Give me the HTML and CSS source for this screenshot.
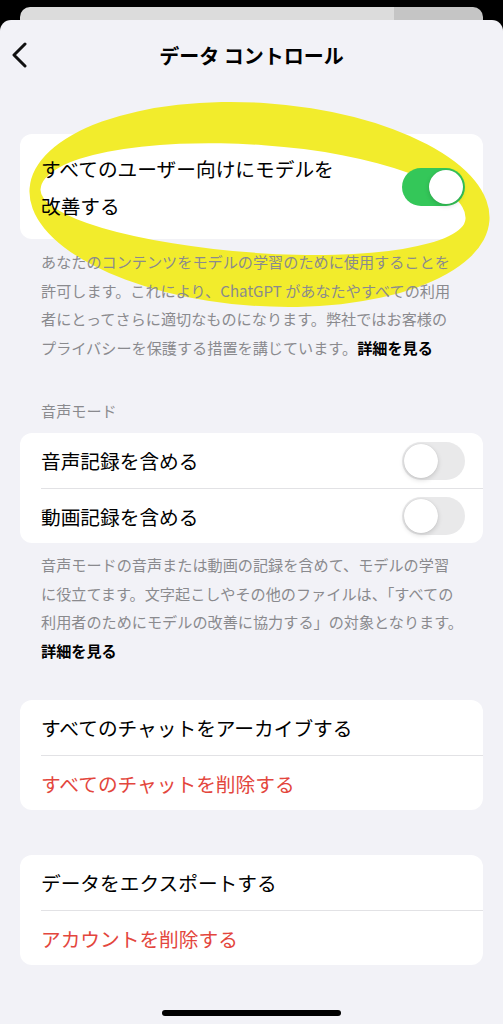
FILE: index.html
```html
<!DOCTYPE html>
<html lang="ja">
<head>
    <meta charset="UTF-8">
    <meta name="viewport" content="width=device-width, initial-scale=1.0">
    <title>データ コントロール</title>
    <link rel="stylesheet" href="styles.css">
</head>
<body>

    <div class="back-sheet"></div>

    <div class="sheet">
        <header class="nav">
            <button class="back" aria-label="戻る">
                <svg width="18" height="26" viewBox="0 0 18 26">
                    <path d="M15 2 L4 13 L15 24" fill="none" stroke="#111" stroke-width="3" stroke-linecap="round" stroke-linejoin="round"/>
                </svg>
            </button>
            <h1>データ コントロール</h1>
            <span></span>
        </header>

        <section class="group group-first">
            <div class="card">
                <div class="row row-tall">
                    <span class="label">すべてのユーザー向けにモデルを<br>改善する</span>
                    <span class="switch on"></span>
                </div>
            </div>
            <p class="note">あなたのコンテンツをモデルの学習のために使用することを<br>許可します。これにより、ChatGPT があなたやすべての利用<br>者にとってさらに適切なものになります。弊社ではお客様の<br>プライバシーを保護する措置を講じています。<b>詳細を見る</b></p>
        </section>

        <section class="group group-voice">
            <h2 class="group-title">音声モード</h2>
            <div class="card">
                <div class="row">
                    <span class="label">音声記録を含める</span>
                    <span class="switch"></span>
                </div>
                <div class="row">
                    <span class="label">動画記録を含める</span>
                    <span class="switch"></span>
                </div>
            </div>
            <p class="note note-voice">音声モードの音声または動画の記録を含めて、モデルの学習<br>に役立てます。文字起こしやその他のファイルは、「すべての<br>利用者のためにモデルの改善に協力する」の対象となります。<br><b>詳細を見る</b></p>
        </section>

        <section class="group group-chats">
            <div class="card">
                <div class="row">
                    <span class="label">すべてのチャットをアーカイブする</span>
                </div>
                <div class="row danger">
                    <span class="label">すべてのチャットを削除する</span>
                </div>
            </div>
        </section>

        <section class="group group-account">
            <div class="card">
                <div class="row">
                    <span class="label">データをエクスポートする</span>
                </div>
                <div class="row danger">
                    <span class="label">アカウントを削除する</span>
                </div>
            </div>
        </section>

        <div class="home-bar"></div>

        <!-- 蛍光ペンの丸 -->
        <div class="marker"></div>
    </div>

</body>
</html>
```

FILE: styles.css
```css
/* データ コントロール画面 */
* {
    box-sizing: border-box;
}
body {
    margin: 0;
    height: 1024px;
    overflow: hidden;
    background-color: #000;
    font-family: "Noto Sans CJK JP", "Noto Sans", sans-serif;
    color: #000;
}
.back-sheet {
    height: 13px;
    margin: 7px 20px 0;
    border-radius: 10px 10px 0 0;
    background: linear-gradient(to right, #dcdcdc 0, #dcdcdc 374px, #c5c5c5 374px);
}
.sheet {
    position: relative;
    height: 1004px;
    background-color: #f2f2f7;
    border-radius: 11px 11px 0 0;
}
.nav {
    height: 70px;
    display: grid;
    grid-template-columns: 60px 1fr 60px;
    align-items: center;
}
.back {
    display: flex;
    align-items: center;
    padding: 0 0 0 10px;
    border: none;
    background: none;
}
.nav h1 {
    margin: 0;
    font-size: 20px;
    font-weight: 600;
    text-align: center;
}
.card {
    margin: 0 20px;
    background-color: #fff;
    border-radius: 12px;
}
.row {
    display: flex;
    align-items: center;
    justify-content: space-between;
    height: 55px;
    margin-left: 21px;
    padding-right: 18px;
    font-size: 19.7px;
}
.row + .row {
    border-top: 1px solid #e2e2e5;
}
.row-tall {
    height: auto;
    padding-top: 16px;
    padding-bottom: 15px;
    line-height: 37px;
}
/* 文字とスイッチはマーカーより上に描く */
.label, .note, .switch {
    position: relative;
    z-index: 2;
}
.danger {
    color: #e3463d;
}
.note {
    margin: 8px 20px 0 41px;
    font-size: 15.15px;
    line-height: 28.5px;
    color: #8a8a8e;
}
.note b {
    color: #000;
    font-weight: 600;
}
.note-voice {
    margin-top: 7px;
}
.group-first {
    margin-top: 44px;
}
.group-title {
    margin: 39px 0 13px 41px;
    font-size: 15.15px;
    line-height: 20px;
    font-weight: normal;
    color: #8a8a8e;
}
.group-chats {
    margin-top: 36px;
}
.group-account {
    margin-top: 45px;
}
.switch {
    flex: none;
    width: 63px;
    height: 38px;
    border-radius: 19px;
    background-color: #e9e9ea;
}
.switch::after {
    content: "";
    position: absolute;
    top: 2px;
    left: 2px;
    width: 34px;
    height: 34px;
    border-radius: 50%;
    background-color: #fff;
    box-shadow: 0 2px 5px rgba(0,0,0,0.15), 0 0 1px rgba(0,0,0,0.15);
}
.switch.on {
    background-color: #34c759;
}
.switch.on::after {
    left: 27px;
}
.home-bar {
    width: 179px;
    height: 6px;
    margin: 45px auto 0;
    border-radius: 3px;
    background-color: #000;
}
/* 画面の上に描かれた黄色いマーカー: 太さの違う枠線で楕円の輪を作る */
.marker {
    position: absolute;
    top: 83px;
    left: 29px;
    z-index: 1;
    width: 461px;
    height: 203px;
    border-style: solid;
    border-color: #f2ec2c;
    border-width: 42px 24px 53px 11px;
    border-radius: 50%;
    transform: rotate(4deg);
    pointer-events: none;
}
```
